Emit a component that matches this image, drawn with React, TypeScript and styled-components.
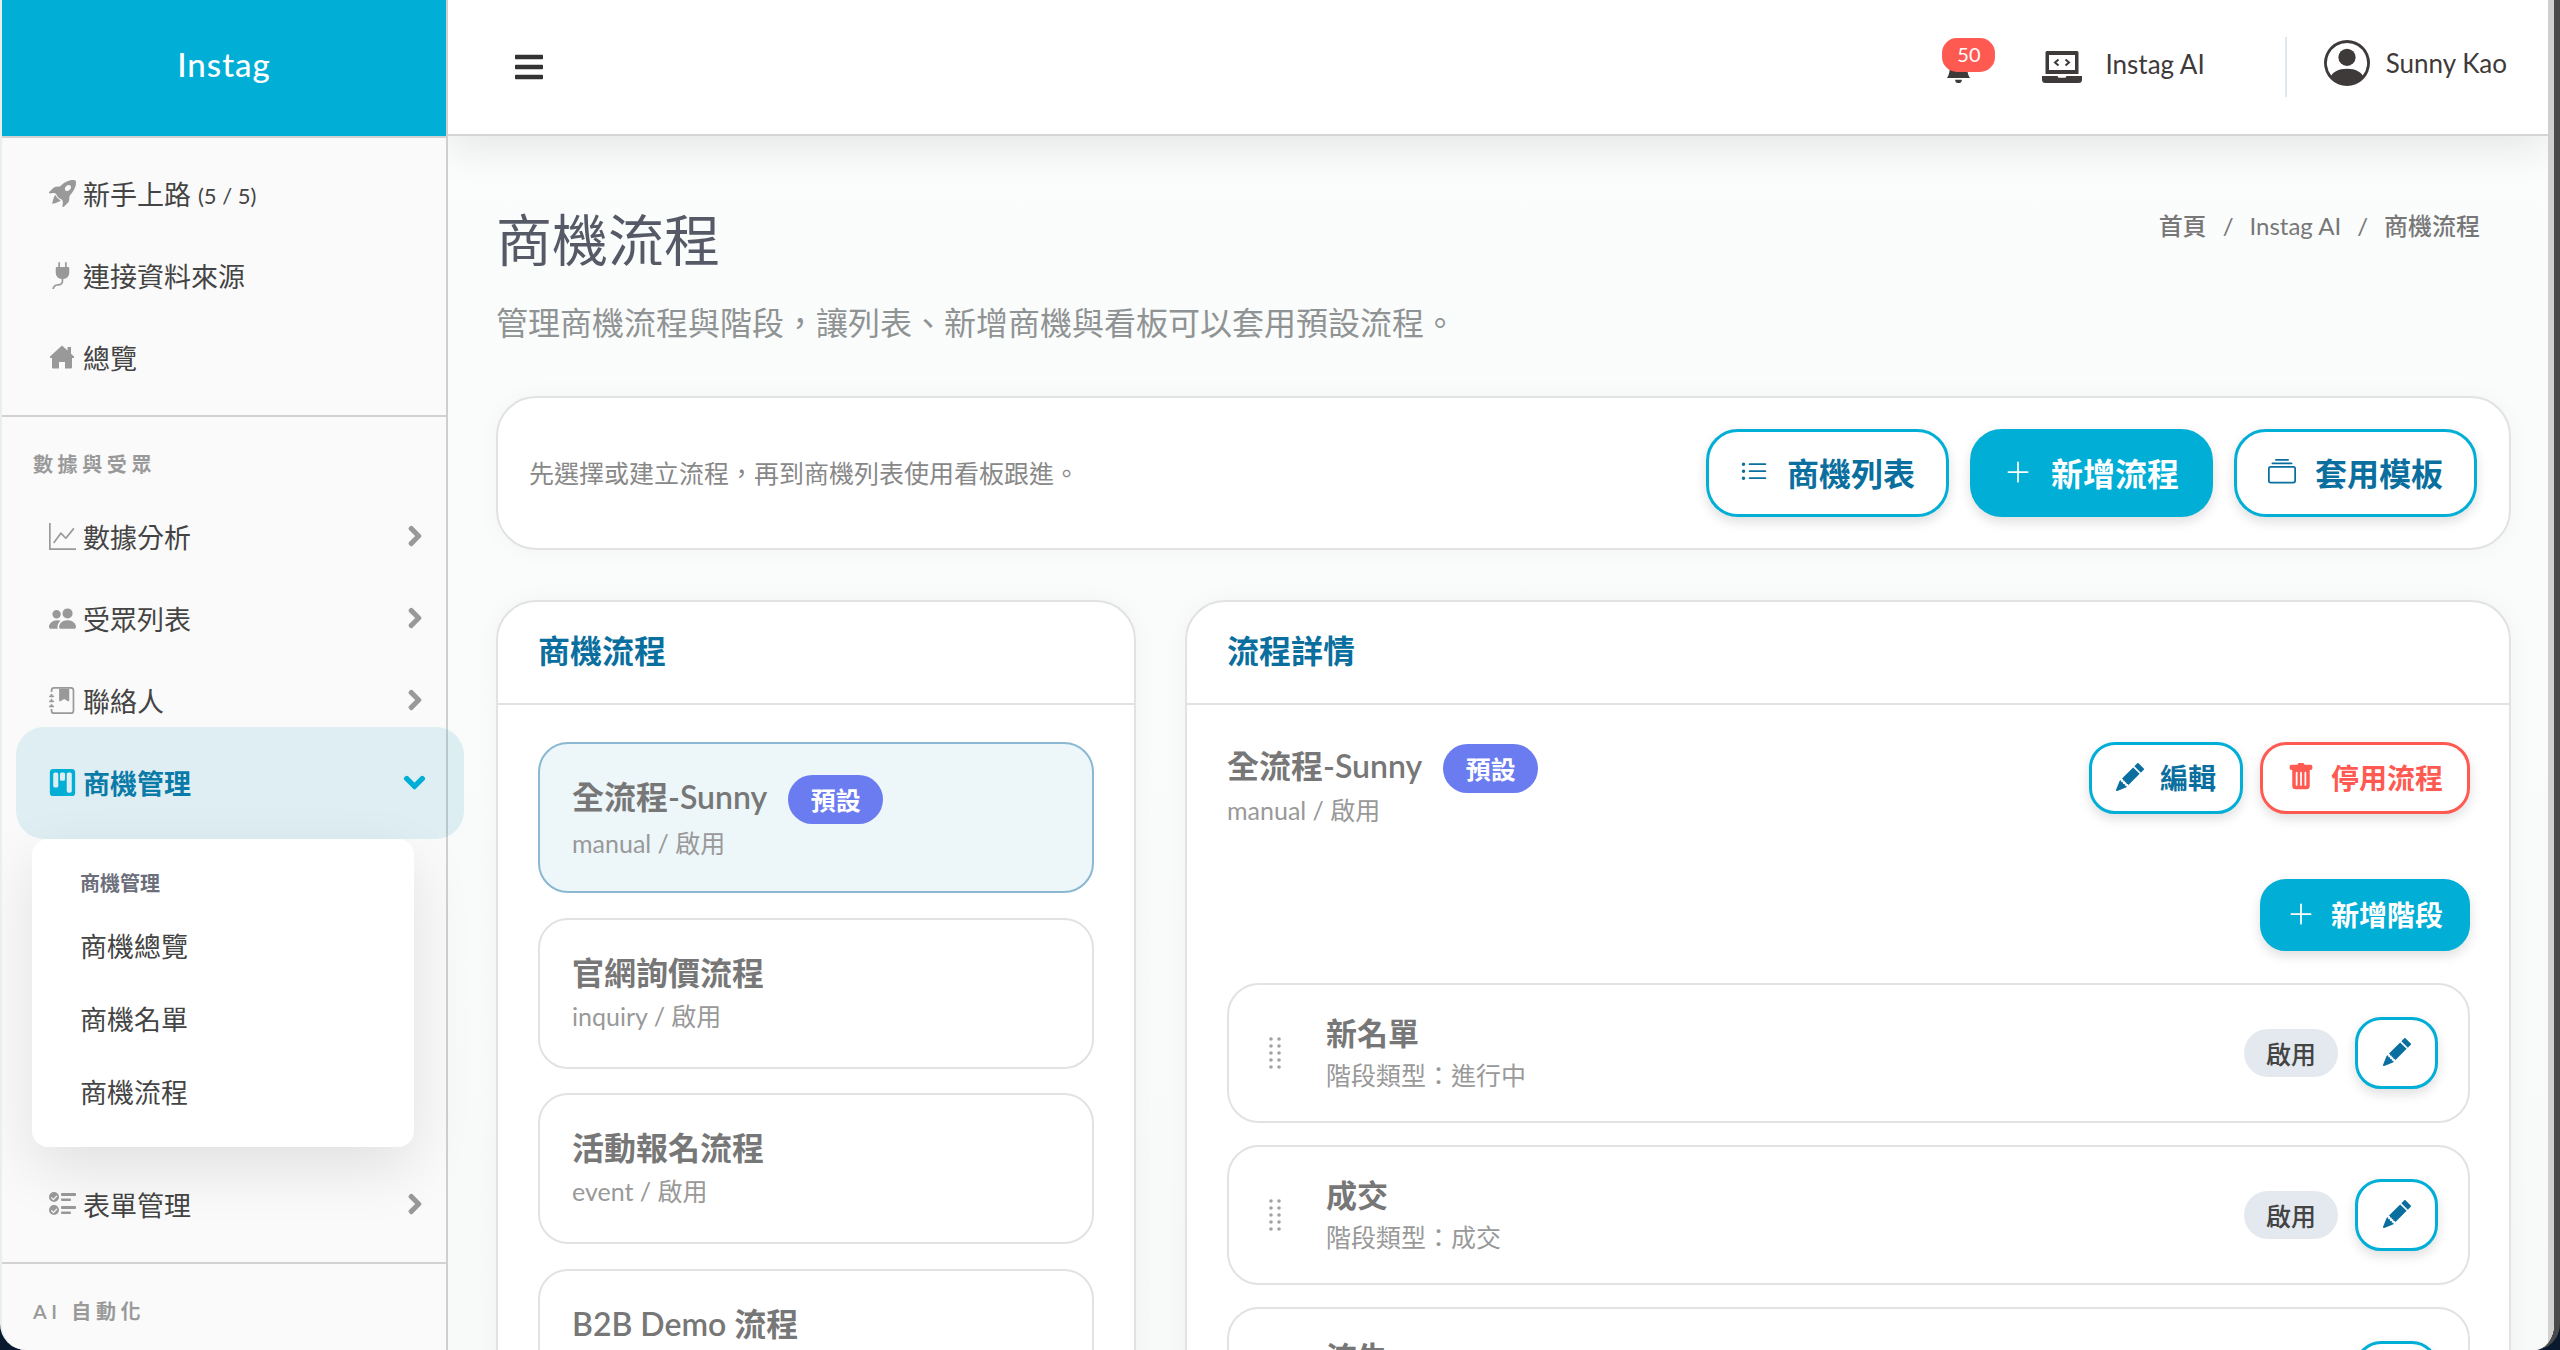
import React from "react";
import styled, { createGlobalStyle } from "styled-components";
import {
  BsBellFill,
  BsCollection,
  BsGraphUp,
  BsJournalBookmarkFill,
  BsKanbanFill,
  BsListUl,
  BsPeopleFill,
  BsPencilFill,
  BsPersonCircle,
  BsPlugFill,
  BsPlusLg,
  BsRocketTakeoffFill,
  BsTrashFill,
} from "react-icons/bs";
import { FaBars, FaChevronDown, FaChevronRight } from "react-icons/fa";

const GlobalStyle = createGlobalStyle`
  html, body {
    margin: 0;
    padding: 0;
    background: #0a1a2e;
  }
  * {
    box-sizing: border-box;
  }
  body {
    font-family: "Lato", "Noto Sans CJK TC", sans-serif;
    color: #444;
  }
`;

const Frame = styled.div`
  width: 2560px;
  height: 1350px;
  overflow: hidden;
  background: #0a1a2e;
`;
const Window = styled.div`
  display: flex;
  height: 1350px;
  overflow: hidden;
  background: #fafafa;
  border-right: 6px solid #4a4a4a;
  border-left: 2px solid #e9eef0;
  border-radius: 0 0 26px 26px;
`;

/* sidebar */
const Sidebar = styled.aside`
  position: relative;
  z-index: 2;
  width: 446px;
  flex: none;
  background: #fafafa;
  border-right: 2px solid #cfcfcf;
`;
const Brand = styled.div`
  height: 138px;
  display: flex;
  align-items: center;
  justify-content: center;
  padding-bottom: 8px;
  background: #00aed6;
  border-bottom: 2px solid #d2d2d2;
  color: #fff;
  font-size: 33px;
  font-weight: 500;
  letter-spacing: 1px;
`;
const MenuGroup = styled.div<{ $top: number }>`
  padding: ${(p) => p.$top}px 0 17px;
  border-bottom: 2px solid #d2d2d2;
`;
const Row = styled.div`
  height: 82px;
  display: flex;
  align-items: center;
  gap: 7px;
  padding: 0 20px 0 46px;
  font-size: 27px;
  color: #444;
`;
const ActiveRow = styled(Row)`
  height: 112px;
  margin: -14px -18px 0 14px;
  padding: 0 38px 2px 32px;
  border-radius: 28px;
  background: rgba(0, 145, 190, 0.11);
  color: #0a7ba8;
  font-weight: 700;
`;
const IconBox = styled.span<{ $color?: string }>`
  width: 28px;
  height: 28px;
  flex: none;
  display: flex;
  align-items: center;
  justify-content: center;
  color: ${(p) => p.$color || "#999"};
  font-size: 27px;
`;
const Count = styled.small`
  font-size: 22px;
  padding-top: 4px;
`;
const Arrow = styled.span<{ $size?: number; $color?: string }>`
  margin-left: auto;
  display: flex;
  color: ${(p) => p.$color || "#999"};
  font-size: ${(p) => p.$size || 22}px;
  svg {
    stroke: currentColor;
    stroke-width: 36;
  }
`;
const SectionLabel = styled.div`
  height: 28px;
  margin: 33px 0 17px 31px;
  font-size: 20px;
  line-height: 28px;
  font-weight: 600;
  letter-spacing: 4.6px;
  color: #999;
`;
const Flyout = styled.div`
  position: relative;
  z-index: 3;
  height: 308px;
  margin: 0 32px 16px 30px;
  padding: 30px 0 0 48px;
  background: #fff;
  border-radius: 16px;
  box-shadow: 0 22px 60px rgba(0, 0, 0, 0.1);
`;
const FlyoutTitle = styled.div`
  height: 28px;
  margin-bottom: 12px;
  font-size: 20px;
  line-height: 28px;
  font-weight: 600;
  color: #6c6f7b;
`;
const FlyoutItem = styled.div`
  height: 73px;
  display: flex;
  align-items: center;
  font-size: 27px;
  color: #444;
`;

/* main */
const Main = styled.main`
  flex: 1;
  min-width: 0;
  display: flex;
  flex-direction: column;
  overflow: hidden;
  background: #f8f9f9;
  border-right: 6px solid #d0d0d0;
`;
const Topbar = styled.header`
  position: relative;
  height: 136px;
  flex: none;
  display: flex;
  align-items: center;
  padding: 0 41px 0 65px;
  background: #fff;
  border-bottom: 2px solid #d4d4d4;
  box-shadow: 0 12px 40px rgba(0, 0, 0, 0.09);
  color: #3f3a3a;
`;
const Burger = styled.span`
  display: flex;
  font-size: 32px;
  color: #333;
`;
const TopActions = styled.div`
  margin-left: auto;
  display: flex;
  align-items: center;
`;
const Bell = styled.span`
  position: relative;
  display: flex;
  margin-right: 70px;
  margin-top: 4px;
  font-size: 27px;
  color: #3f3a3a;
`;
const BellBadge = styled.span`
  position: absolute;
  left: -3px;
  top: -18px;
  width: 53px;
  height: 34px;
  border-radius: 15px;
  background: #ff5a52;
  color: #fff;
  font-size: 20px;
  line-height: 32px;
  text-align: center;
`;
const AiLink = styled.span`
  display: flex;
  align-items: center;
  gap: 23px;
  font-size: 26px;
  margin-right: 80px;
`;
const AiText = styled.span`
  margin-top: -6px;
`;
const TopDivider = styled.span`
  width: 2px;
  height: 60px;
  background: #dfe7ef;
  margin-right: 37px;
`;
const UserBox = styled.span`
  display: flex;
  align-items: center;
  gap: 16px;
  font-size: 26px;
  margin-top: -8px;
  svg {
    font-size: 46px;
  }
`;

const Page = styled.div`
  flex: 1;
  padding: 69px 37px 0 48px;
  background: linear-gradient(#fbfcfc, #f7f8f8);
`;
const TitleRow = styled.div`
  display: flex;
  align-items: flex-start;
  justify-content: space-between;
`;
const PageTitle = styled.h1`
  margin: 0;
  font-size: 56px;
  line-height: 70px;
  font-weight: 400;
  color: #555a66;
`;
const Breadcrumb = styled.div`
  display: flex;
  gap: 16px;
  margin: 4px 31px 0 0;
  font-size: 24px;
  line-height: 34px;
  color: #777;
  b {
    font-weight: 500;
  }
`;
const Subtitle = styled.p`
  margin: 26px 0 51px;
  font-size: 32px;
  line-height: 44px;
  color: #8f9393;
`;
const Toolbar = styled.section`
  height: 154px;
  display: flex;
  align-items: center;
  gap: 21px;
  padding: 0 32px 0 31px;
  background: #fff;
  border: 2px solid #e2e2e2;
  border-radius: 40px;
  box-shadow: 0 0 24px rgba(0, 0, 0, 0.03);
`;
const ToolbarText = styled.span`
  margin-right: auto;
  padding-bottom: 3px;
  font-size: 25px;
  color: #888;
`;
const Button = styled.button<{ $tone?: "outline" | "solid" | "danger"; $large?: boolean }>`
  display: inline-flex;
  align-items: center;
  justify-content: center;
  gap: ${(p) => (p.$large ? 19 : 16)}px;
  height: ${(p) => (p.$large ? 88 : 72)}px;
  width: ${(p) => (p.$large ? "243px" : "auto")};
  padding: 0 0 3px;
  border: 3px solid ${(p) => (p.$tone === "danger" ? "#ff5a52" : "#00aed6")};
  border-radius: ${(p) => (p.$large ? 32 : 26)}px;
  background: ${(p) => (p.$tone === "solid" ? "#00aed6" : "#fff")};
  color: ${(p) =>
    p.$tone === "solid" ? "#fff" : p.$tone === "danger" ? "#ff5a52" : "#0a6f9e"};
  font-family: inherit;
  font-size: ${(p) => (p.$large ? 32 : 28)}px;
  font-weight: 700;
  box-shadow: 0 5px 12px rgba(0, 0, 0, 0.13);
  svg {
    font-size: 28px;
  }
`;
const SmallButton = styled(Button)<{ $w: number }>`
  width: ${(p) => p.$w}px;
`;
const Columns = styled.div`
  display: grid;
  grid-template-columns: 640px 1fr;
  gap: 49px;
  margin-top: 50px;
`;
const Panel = styled.section`
  background: #fff;
  border: 2px solid #e2e2e2;
  border-radius: 40px 40px 0 0;
  height: 900px;
  box-shadow: 0 0 24px rgba(0, 0, 0, 0.03);
`;
const PanelHead = styled.h2`
  height: 103px;
  margin: 0;
  display: flex;
  align-items: center;
  padding: 0 0 7px 40px;
  border-bottom: 2px solid #e2e2e2;
  font-size: 32px;
  font-weight: 700;
  color: #0a6f9e;
`;
const FlowList = styled.div`
  display: flex;
  flex-direction: column;
  gap: 24.5px;
  padding: 37px 40px 0;
`;
const FlowItem = styled.div<{ $active?: boolean }>`
  height: 151px;
  flex: none;
  padding: 31px 32px 0;
  border: 2px solid ${(p) => (p.$active ? "#8ab8d2" : "#e2e2e2")};
  border-radius: 30px;
  background: ${(p) => (p.$active ? "#edf6f9" : "#fff")};
`;
const FlowTitle = styled.div`
  min-height: 46px;
  display: flex;
  align-items: flex-start;
  gap: 21px;
  font-size: 32px;
  line-height: 44px;
  font-weight: 600;
  color: #777;
`;
const FlowSub = styled.div`
  font-size: 25px;
  line-height: 38px;
  color: #999;
`;
const DefaultBadge = styled.span`
  width: 95px;
  height: 49px;
  display: inline-flex;
  align-items: center;
  justify-content: center;
  border-radius: 25px;
  background: #6b7bf0;
  color: #fff;
  font-size: 25px;
  font-weight: 700;
`;
const DetailBody = styled.div`
  padding: 37px 39px 0 40px;
`;
const DetailHead = styled.div`
  display: flex;
  align-items: flex-start;
  justify-content: space-between;
  margin-bottom: 52px;
`;
const DetailTitle = styled(FlowTitle)`
  min-height: 48px;
  margin-top: 2px;
`;
const DetailSub = styled(FlowSub)`
  line-height: 34px;
`;
const ButtonGroup = styled.div`
  display: flex;
  gap: 17px;
`;
const AddRow = styled.div`
  display: flex;
  justify-content: flex-end;
  margin-bottom: 32px;
`;
const StageList = styled.div`
  display: flex;
  flex-direction: column;
  gap: 22px;
`;
const Stage = styled.div`
  height: 140px;
  flex: none;
  display: flex;
  align-items: center;
  padding: 0 30px 0 40px;
  border: 2px solid #e2e2e2;
  border-radius: 32px;
`;
const Grip = styled.svg`
  width: 12px;
  height: 32px;
  flex: none;
  margin-right: 45px;
  fill: #a2a2a2;
`;
const StageText = styled.div`
  min-height: 82px;
  margin-right: auto;
`;
const StageTitle = styled.div`
  font-size: 31px;
  line-height: 42px;
  font-weight: 700;
  color: #777;
  margin-bottom: 2px;
`;
const StageSub = styled.div`
  font-size: 25px;
  line-height: 38px;
  color: #999;
`;
const StatusPill = styled.span`
  width: 94px;
  height: 48px;
  display: flex;
  align-items: center;
  justify-content: center;
  margin-right: 17px;
  border-radius: 24px;
  background: #e3e9ef;
  color: #444;
  font-size: 25px;
  font-weight: 500;
`;

const HouseIcon = () => (
  <svg width="24" height="24" viewBox="0 0 24 24" fill="#999">
    <path d="M12 0.500L17.500 5.500V2H21V8.700L24 11.500V13H22V22.500A1 1 0 0 1 21 23.500H15V17H9V23.500H3A1 1 0 0 1 2 22.500V13H0V11.500Z" />
  </svg>
);

const LaptopCode = () => (
  <svg width="40" height="32" viewBox="0 0 40 32" fill="#3f3a3a">
    <path
      fillRule="evenodd"
      d="M5 0h30a1.500 1.500 0 0 1 1.500 1.500V23h-33V1.500A1.500 1.500 0 0 1 5 0zm2 4v15h26V4H7z"
    />
    <path d="M0 25h15.500l1 1.800h7l1-1.800H40v3.500a3.500 3.500 0 0 1-3.500 3.500h-33A3.500 3.500 0 0 1 0 28.500V25z" />
    <path d="M16.500 8.500l-3.500 3 3.500 3" fill="none" stroke="#3f3a3a" strokeWidth="2" />
    <path d="M23.500 8.500l3.500 3-3.500 3" fill="none" stroke="#3f3a3a" strokeWidth="2" />
  </svg>
);

const ChecksIcon = () => (
  <svg width="27" height="24" viewBox="0 0 27 24" fill="#999">
    <path
      fillRule="evenodd"
      d="M5 0a5 5 0 1 1 0 10A5 5 0 0 1 5 0zm-2.200 5l1.600 1.800L7.400 3.400l1 .8-4 4.300-2.500-2.700zM5 13a5 5 0 1 1 0 10 5 5 0 0 1 0-10zm-2.200 5l1.600 1.800 3-3.400 1 .8-4 4.300-2.500-2.700z"
    />
    <rect x="12" y="1" width="15" height="3" rx="1" />
    <rect x="12" y="6.500" width="10" height="2.500" rx="1" />
    <rect x="12" y="14" width="15" height="3" rx="1" />
    <rect x="12" y="19.500" width="10" height="2.500" rx="1" />
  </svg>
);

const GripDots = () => (
  <Grip viewBox="0 0 12 32">
    {[2, 9, 16, 23, 30].map((y) => (
      <React.Fragment key={y}>
        <circle cx="2" cy={y} r="1.800" />
        <circle cx="10" cy={y} r="1.800" />
      </React.Fragment>
    ))}
  </Grip>
);

const flows = [
  { name: "官網詢價流程", sub: "inquiry / 啟用" },
  { name: "活動報名流程", sub: "event / 啟用" },
  { name: "B2B Demo 流程" },
];

const stages = [
  { name: "新名單", type: "階段類型\uFF1A進行中" },
  { name: "成交", type: "階段類型\uFF1A成交" },
  { name: "流失" },
];

const App = () => {
  return (
    <Frame>
      <GlobalStyle />
      <Window>
        <Sidebar>
          <Brand>Instag</Brand>
          <MenuGroup $top={14}>
            <Row>
              <IconBox><BsRocketTakeoffFill /></IconBox>
              新手上路 <Count>(5 / 5)</Count>
            </Row>
            <Row>
              <IconBox><BsPlugFill /></IconBox>
              連接資料來源
            </Row>
            <Row>
              <IconBox><HouseIcon /></IconBox>
              總覽
            </Row>
          </MenuGroup>
          <SectionLabel>數據與受眾</SectionLabel>
          <Row>
            <IconBox><BsGraphUp /></IconBox>
            數據分析
            <Arrow><FaChevronRight /></Arrow>
          </Row>
          <Row>
            <IconBox><BsPeopleFill /></IconBox>
            受眾列表
            <Arrow><FaChevronRight /></Arrow>
          </Row>
          <Row>
            <IconBox><BsJournalBookmarkFill /></IconBox>
            聯絡人
            <Arrow><FaChevronRight /></Arrow>
          </Row>
          <ActiveRow>
            <IconBox $color="#00aed6"><BsKanbanFill /></IconBox>
            商機管理
            <Arrow $color="#00aed6" $size={23}><FaChevronDown /></Arrow>
          </ActiveRow>
          <Flyout>
            <FlyoutTitle>商機管理</FlyoutTitle>
            <FlyoutItem>商機總覽</FlyoutItem>
            <FlyoutItem>商機名單</FlyoutItem>
            <FlyoutItem>商機流程</FlyoutItem>
          </Flyout>
          <MenuGroup $top={0}>
            <Row>
              <IconBox><ChecksIcon /></IconBox>
              表單管理
              <Arrow><FaChevronRight /></Arrow>
            </Row>
          </MenuGroup>
          <SectionLabel>AI 自動化</SectionLabel>
        </Sidebar>

        <Main>
          <Topbar>
            <Burger><FaBars /></Burger>
            <TopActions>
              <Bell>
                <BsBellFill />
                <BellBadge>50</BellBadge>
              </Bell>
              <AiLink>
                <LaptopCode />
                <AiText>Instag AI</AiText>
              </AiLink>
              <TopDivider />
              <UserBox>
                <BsPersonCircle />
                Sunny Kao
              </UserBox>
            </TopActions>
          </Topbar>

          <Page>
            <TitleRow>
              <PageTitle>商機流程</PageTitle>
              <Breadcrumb>
                <b>首頁</b>
                <span>/</span>
                <span>Instag AI</span>
                <span>/</span>
                <b>商機流程</b>
              </Breadcrumb>
            </TitleRow>
            <Subtitle>{"管理商機流程與階段\uFF0C讓列表、新增商機與看板可以套用預設流程。"}</Subtitle>

            <Toolbar>
              <ToolbarText>{"先選擇或建立流程\uFF0C再到商機列表使用看板跟進。"}</ToolbarText>
              <Button $large>
                <BsListUl />
                商機列表
              </Button>
              <Button $large $tone="solid">
                <BsPlusLg />
                新增流程
              </Button>
              <Button $large>
                <BsCollection />
                套用模板
              </Button>
            </Toolbar>

            <Columns>
              <Panel>
                <PanelHead>商機流程</PanelHead>
                <FlowList>
                  <FlowItem $active>
                    <FlowTitle>
                      全流程-Sunny
                      <DefaultBadge>預設</DefaultBadge>
                    </FlowTitle>
                    <FlowSub>manual / 啟用</FlowSub>
                  </FlowItem>
                  {flows.map((f) => (
                    <FlowItem key={f.name}>
                      <FlowTitle>{f.name}</FlowTitle>
                      {f.sub && <FlowSub>{f.sub}</FlowSub>}
                    </FlowItem>
                  ))}
                </FlowList>
              </Panel>

              <Panel>
                <PanelHead>流程詳情</PanelHead>
                <DetailBody>
                  <DetailHead>
                    <div>
                      <DetailTitle>
                        全流程-Sunny
                        <DefaultBadge>預設</DefaultBadge>
                      </DetailTitle>
                      <DetailSub>manual / 啟用</DetailSub>
                    </div>
                    <ButtonGroup>
                      <SmallButton $w={154}>
                        <BsPencilFill />
                        編輯
                      </SmallButton>
                      <SmallButton $w={210} $tone="danger">
                        <BsTrashFill />
                        停用流程
                      </SmallButton>
                    </ButtonGroup>
                  </DetailHead>
                  <AddRow>
                    <SmallButton $w={210} $tone="solid">
                      <BsPlusLg />
                      新增階段
                    </SmallButton>
                  </AddRow>
                  <StageList>
                    {stages.map((s) => (
                      <Stage key={s.name}>
                        <GripDots />
                        <StageText>
                          <StageTitle>{s.name}</StageTitle>
                          {s.type && <StageSub>{s.type}</StageSub>}
                        </StageText>
                        <StatusPill>啟用</StatusPill>
                        <SmallButton $w={83}>
                          <BsPencilFill />
                        </SmallButton>
                      </Stage>
                    ))}
                  </StageList>
                </DetailBody>
              </Panel>
            </Columns>
          </Page>
        </Main>
      </Window>
    </Frame>
  );
};

export default App;
